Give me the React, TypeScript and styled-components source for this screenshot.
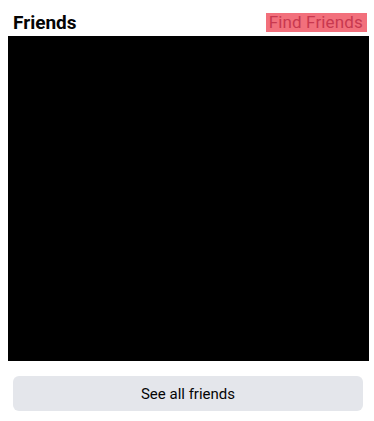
import React from "react";
import styled, { createGlobalStyle } from "styled-components";

const GlobalStyle = createGlobalStyle`
  html, body {
    margin: 0;
    padding: 0;
    background: #ffffff;
    font-family: Roboto, "Liberation Sans", Arial, sans-serif;
  }
`;

const Container = styled.div`
  width: 361px;
  margin-left: 8px;
  display: flex;
  flex-direction: column;
`;

const Header = styled.div`
  height: 36px;
  display: flex;
  align-items: flex-start;
  justify-content: space-between;
  padding: 0 2px 0 5px;
  box-sizing: border-box;
`;

const Title = styled.h2`
  margin: 11px 0 0;
  font-size: 19px;
  line-height: 23px;
  font-weight: 700;
  color: #050505;
`;

const FindLink = styled.a`
  margin-top: 13px;
  height: 19px;
  padding: 0 4px 0 3px;
  background: #f2707c;
  color: #c8384f;
  font-size: 17px;
  line-height: 19px;
  letter-spacing: 0.15px;
  text-decoration: none;
  cursor: pointer;
`;

const Grid = styled.div`
  height: 325px;
  background: #000000;
`;

const SeeAllButton = styled.button`
  margin: 15px 6px 0 5px;
  height: 35px;
  border: none;
  border-radius: 6px;
  background: #e4e6eb;
  color: #050505;
  font-family: Roboto, "Liberation Sans", Arial, sans-serif;
  font-size: 15px;
  cursor: pointer;
`;

const App = () => {
  return (
    <>
      <GlobalStyle />
      <Container>
        <Header>
          <Title>Friends</Title>
          <FindLink>Find Friends</FindLink>
        </Header>
        <Grid />
        <SeeAllButton>See all friends</SeeAllButton>
      </Container>
    </>
  );
};

export default App;
